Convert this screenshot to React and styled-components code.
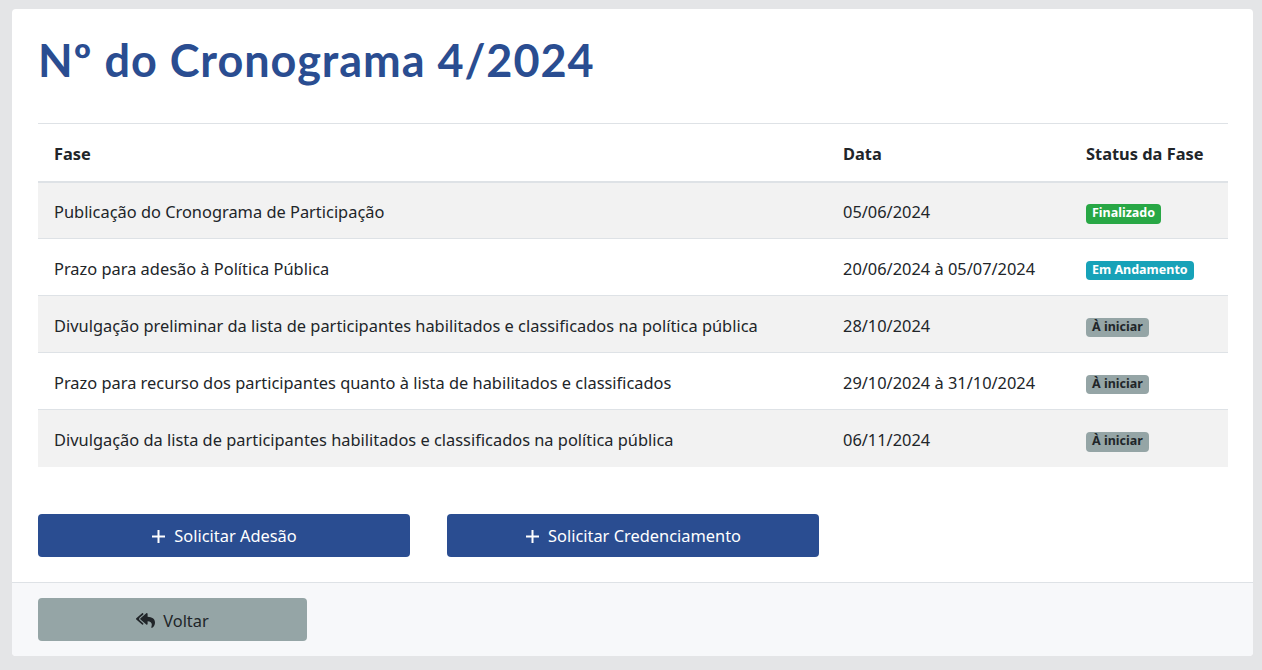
import React from 'react';
import styled, { createGlobalStyle } from 'styled-components';
import { FaReplyAll } from 'react-icons/fa';

const GlobalStyle = createGlobalStyle`
  html, body {
    margin: 0;
    padding: 0;
    background: #e4e5e7;
    font-family: "Noto Sans", "Open Sans", sans-serif;
    color: #212529;
  }
  * { box-sizing: border-box; }
`;

const Page = styled.div`
  padding: 9px 9px 14px 12px;
  height: 670px;
`;

const Card = styled.div`
  background: #fff;
  border-radius: 4px;
  height: 647px;
  display: flex;
  flex-direction: column;
`;

const CardBody = styled.div`
  padding: 24px 25px 25px 26px;
  flex: 1;
`;

const Title = styled.h1`
  margin: 0 0 36px 0;
  font-family: "Lato", sans-serif;
  font-weight: 700;
  font-size: 45px;
  line-height: 54px;
  letter-spacing: 0.95px;
  color: #2a4d91;
`;

const Table = styled.table`
  width: 100%;
  border-collapse: collapse;
  border-top: 1px solid #dee2e6;
  font-size: 16.4px;
`;

const HeadCell = styled.th`
  text-align: left;
  font-weight: 700;
  padding: 2px 16px 0;
  height: 58px;
  white-space: nowrap;
  border-bottom: 2px solid #dee2e6;
  width: ${p => p.$w || 'auto'};
`;

const Row = styled.tr`
  background: ${p => (p.$striped ? '#f2f2f2' : '#fff')};
  border-bottom: 1px solid #dee2e6;
  &:last-child { border-bottom: none; }
`;

const Cell = styled.td`
  padding: 2px 16px 0;
  height: 57px;
  white-space: nowrap;
`;

const badgeColors = {
  done: { bg: '#28a745', fg: '#fff' },
  running: { bg: '#17a2b8', fg: '#fff' },
  todo: { bg: '#95a5a6', fg: '#212529' },
};

const Badge = styled.span`
  display: inline-block;
  font-size: 12.5px;
  font-weight: 700;
  line-height: 1;
  padding: 3px 6px 4px;
  border-radius: 4px;
  background: ${p => badgeColors[p.$kind].bg};
  color: ${p => badgeColors[p.$kind].fg};
`;

const Actions = styled.div`
  display: flex;
  gap: 37px;
  margin-top: 47px;
`;

const Button = styled.button`
  width: ${p => p.$w || '372px'};
  height: 43px;
  border: none;
  border-radius: 4px;
  display: flex;
  align-items: center;
  justify-content: center;
  gap: 8px;
  font-family: "Noto Sans", "Open Sans", sans-serif;
  font-size: 16.4px;
  background: ${p => (p.$variant === 'gray' ? '#95a5a6' : '#2a4d91')};
  color: ${p => (p.$variant === 'gray' ? '#212529' : '#fff')};
  cursor: pointer;
  padding-top: 2px;
`;

const PlusIcon = () => (
  <svg width="15" height="15" viewBox="0 0 15 15" style={{ marginTop: 1 }}>
    <path d="M7.5 1v13M1 7.5h13" stroke="currentColor" strokeWidth="2" fill="none" />
  </svg>
);

const Footer = styled.div`
  background: #f7f8fa;
  border-top: 1px solid #dee2e6;
  padding: 15px 26px 15px 26px;
  border-radius: 0 0 4px 4px;
`;

const rows = [
  { fase: 'Publicação do Cronograma de Participação', data: '05/06/2024', kind: 'done', label: 'Finalizado' },
  { fase: 'Prazo para adesão à Política Pública', data: '20/06/2024 à 05/07/2024', kind: 'running', label: 'Em Andamento' },
  { fase: 'Divulgação preliminar da lista de participantes habilitados e classificados na política pública', data: '28/10/2024', kind: 'todo', label: 'À iniciar' },
  { fase: 'Prazo para recurso dos participantes quanto à lista de habilitados e classificados', data: '29/10/2024 à 31/10/2024', kind: 'todo', label: 'À iniciar' },
  { fase: 'Divulgação da lista de participantes habilitados e classificados na política pública', data: '06/11/2024', kind: 'todo', label: 'À iniciar' },
];

export default function App() {
  return (
    <Page>
      <GlobalStyle />
      <Card>
        <CardBody>
          <Title>Nº do Cronograma 4/2024</Title>
          <Table>
            <thead>
              <tr>
                <HeadCell>Fase</HeadCell>
                <HeadCell $w="243px">Data</HeadCell>
                <HeadCell $w="158px">Status da Fase</HeadCell>
              </tr>
            </thead>
            <tbody>
              {rows.map((r, i) => (
                <Row key={i} $striped={i % 2 === 0}>
                  <Cell>{r.fase}</Cell>
                  <Cell>{r.data}</Cell>
                  <Cell><Badge $kind={r.kind}>{r.label}</Badge></Cell>
                </Row>
              ))}
            </tbody>
          </Table>
          <Actions>
            <Button><PlusIcon /> Solicitar Adesão</Button>
            <Button><PlusIcon /> Solicitar Credenciamento</Button>
          </Actions>
        </CardBody>
        <Footer>
          <Button $variant="gray" $w="269px">
            <FaReplyAll size={19} /> Voltar
          </Button>
        </Footer>
      </Card>
    </Page>
  );
}
